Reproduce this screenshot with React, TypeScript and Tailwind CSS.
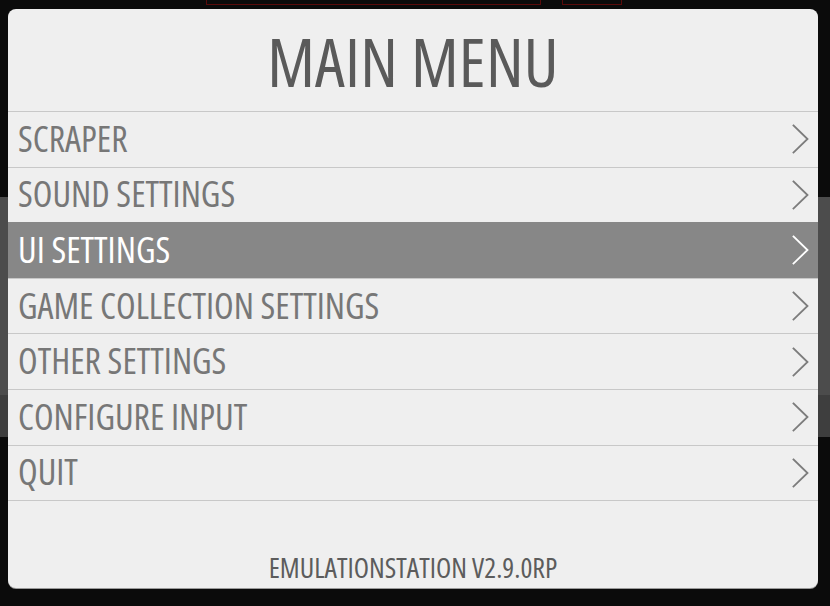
import React from "react";

const items = [
  "SCRAPER",
  "SOUND SETTINGS",
  "UI SETTINGS",
  "GAME COLLECTION SETTINGS",
  "OTHER SETTINGS",
  "CONFIGURE INPUT",
  "QUIT",
];

function Chevron({ light }: { light: boolean }) {
  return (
    <svg
      width="17"
      height="30"
      viewBox="0 0 17 30"
      fill="none"
      stroke={light ? "#ffffff" : "#7c7c7c"}
      strokeWidth="1.8"
      strokeLinecap="square"
    >
      <path d="M1.5 1.5 L15.5 15 L1.5 28.5" />
    </svg>
  );
}

export default function App() {
  const selected = 2;

  return (
    <div
      className="relative w-[830px] h-[606px] overflow-hidden bg-[#0b0b0b]"
      style={{ fontFamily: '"Open Sans", "DejaVu Sans", sans-serif', fontStretch: "75%" }}
    >
      {/* game list behind the menu, only its edges show */}
      <div className="absolute left-[206px] top-[-4px] w-[335px] h-[9px] border border-[#5a0b0b]" />
      <div className="absolute left-[562px] top-[-4px] w-[60px] h-[9px] border border-[#5a0b0b]" />
      <div className="absolute left-0 top-[197px] w-full h-[240px] bg-[#4c4c4c] border-b-[42px] border-[#3e3e3e]" />

      <div className="relative pt-[9px] pl-[8px]">
        <div className="w-[810px] h-[579px] rounded-[8px] bg-[#efefef] flex flex-col shadow-[0_1px_0_#9a9a9a]">
          <div className="h-[102px] flex items-center justify-center pt-[2px]">
            <h1 className="text-[67px] leading-none text-[#5a5a5a] tracking-[0.3px]">MAIN MENU</h1>
          </div>
          <div className="flex flex-col border-b border-[#c8c8c8]">
            {items.map((item, i) => (
              <div
                key={item}
                className={
                  i === selected
                    ? "h-[55.6px] border-t border-[#878787] bg-[#878787] flex items-center justify-between pl-[10px] pr-[9px]"
                    : "h-[55.6px] border-t border-[#c8c8c8] flex items-center justify-between pl-[10px] pr-[9px]"
                }
              >
                <span
                  className={
                    i === selected
                      ? "text-[36px] leading-none text-white -mt-[1px]"
                      : "text-[36px] leading-none text-[#777777] -mt-[1px]"
                  }
                >
                  {item}
                </span>
                <Chevron light={i === selected} />
              </div>
            ))}
          </div>
          <div className="flex-1 flex items-end justify-center pb-[7px]">
            <span className="text-[28px] leading-none text-[#5c5c5c]">EMULATIONSTATION V2.9.0RP</span>
          </div>
        </div>
      </div>
    </div>
  );
}
